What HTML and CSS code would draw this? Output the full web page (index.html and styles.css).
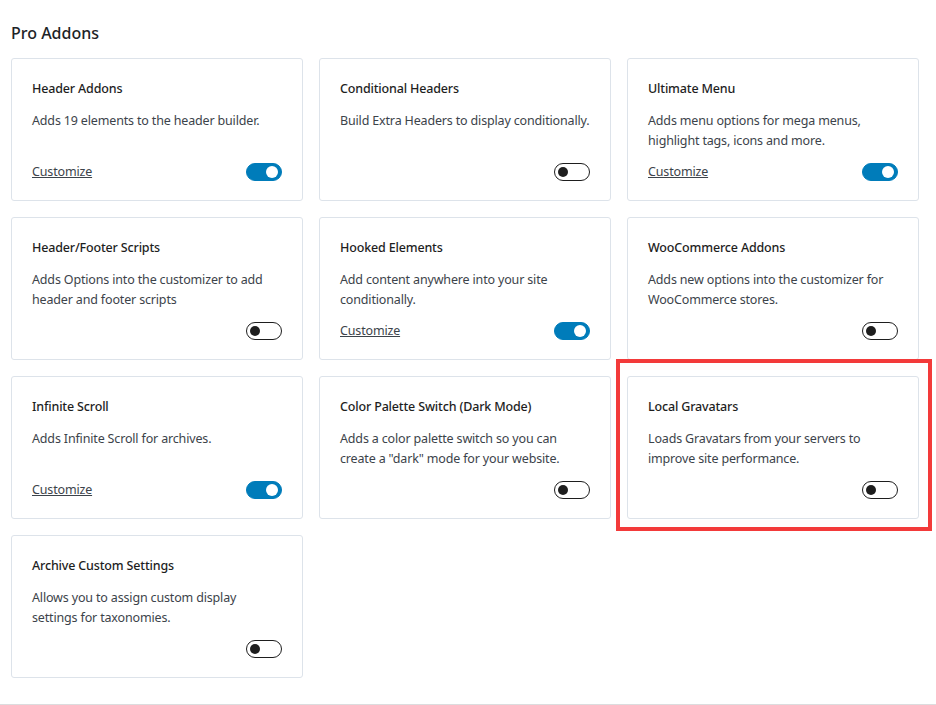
FILE: index.html
```html
<!DOCTYPE html>
<html>
<head>
	<title>Pro Addons</title>
	<link rel="stylesheet" href="styles.css">
</head>
<body>
	<div class="page">
		<h2 class="section-title">Pro Addons</h2>
		<div class="addons">
			<div class="addon">
				<h3>Header Addons</h3>
				<p>Adds 19 elements to the header builder.</p>
				<div class="addon-footer">
					<a href="#">Customize</a>
					<span class="toggle on"></span>
				</div>
			</div>
			<div class="addon">
				<h3>Conditional Headers</h3>
				<p>Build Extra Headers to display conditionally.</p>
				<div class="addon-footer">
					<span class="toggle"></span>
				</div>
			</div>
			<div class="addon">
				<h3>Ultimate Menu</h3>
				<p>Adds menu options for mega menus, highlight tags, icons and more.</p>
				<div class="addon-footer">
					<a href="#">Customize</a>
					<span class="toggle on"></span>
				</div>
			</div>
			<div class="addon">
				<h3>Header/Footer Scripts</h3>
				<p>Adds Options into the customizer to add header and footer scripts</p>
				<div class="addon-footer">
					<span class="toggle"></span>
				</div>
			</div>
			<div class="addon">
				<h3>Hooked Elements</h3>
				<p>Add content anywhere into your site conditionally.</p>
				<div class="addon-footer">
					<a href="#">Customize</a>
					<span class="toggle on"></span>
				</div>
			</div>
			<div class="addon">
				<h3>WooCommerce Addons</h3>
				<p>Adds new options into the customizer for WooCommerce stores.</p>
				<div class="addon-footer">
					<span class="toggle"></span>
				</div>
			</div>
			<div class="addon">
				<h3>Infinite Scroll</h3>
				<p>Adds Infinite Scroll for archives.</p>
				<div class="addon-footer">
					<a href="#">Customize</a>
					<span class="toggle on"></span>
				</div>
			</div>
			<div class="addon">
				<h3>Color Palette Switch (Dark Mode)</h3>
				<p>Adds a color palette switch so you can create a "dark" mode for your website.</p>
				<div class="addon-footer">
					<span class="toggle"></span>
				</div>
			</div>
			<div class="addon highlight">
				<h3>Local Gravatars</h3>
				<p>Loads Gravatars from your servers to improve site performance.</p>
				<div class="addon-footer">
					<span class="toggle"></span>
				</div>
			</div>
			<div class="addon">
				<h3>Archive Custom Settings</h3>
				<p>Allows you to assign custom display settings for taxonomies.</p>
				<div class="addon-footer">
					<span class="toggle"></span>
				</div>
			</div>
		</div>
	</div>
</body>
</html>
```

FILE: styles.css
```css
body {
	margin: 0;
	background: #fff;
	color: #3c434a;
	font-family: "Noto Sans", "Open Sans", sans-serif;
	font-size: 12.5px;
	letter-spacing: -0.16px;
	line-height: 20px;
}

.page {
	padding: 20px 17px 0 11px;
	height: 684px;
	border-bottom: 1px solid #dcdcde;
}

.section-title {
	margin: 0 0 12px;
	font-size: 16px;
	font-weight: 500;
	line-height: 26px;
	letter-spacing: 0;
	color: #1d2327;
}

.addons {
	display: grid;
	grid-template-columns: repeat(3, 292px);
	gap: 16px;
}

.addon {
	position: relative;
	display: flex;
	flex-direction: column;
	padding: 20px 20px 19px 20px;
	border: 1px solid #dde3ea;
	border-radius: 3px;
	background: #fff;
}

.addon h3 {
	margin: 0;
	font-size: 12.5px;
	font-weight: 500;
	line-height: 20px;
	color: #1e1e1e;
}

.addon p {
	margin: 12px 0 12px;
}

.addon-footer {
	margin-top: auto;
	display: flex;
	align-items: center;
	justify-content: space-between;
	height: 18px;
}

.addon-footer a {
	color: #3c434a;
	text-decoration: underline;
}

.toggle {
	position: relative;
	margin-left: auto;
	width: 36px;
	height: 18px;
	box-sizing: border-box;
	border: 1px solid #1e1e1e;
	border-radius: 9px;
	background: #fff;
}

.toggle::after {
	content: "";
	position: absolute;
	top: 3px;
	left: 3px;
	width: 10px;
	height: 10px;
	border-radius: 50%;
	background: #1e1e1e;
}

.toggle.on {
	border-color: #007cba;
	background: #007cba;
}

.toggle.on::after {
	left: auto;
	right: 3px;
	top: 2px;
	width: 12px;
	height: 12px;
	background: #fff;
}

.highlight::before {
	content: "";
	position: absolute;
	top: -18px;
	left: -12px;
	right: -14px;
	bottom: -13px;
	border: 4px solid #f33a3a;
	pointer-events: none;
}
```
